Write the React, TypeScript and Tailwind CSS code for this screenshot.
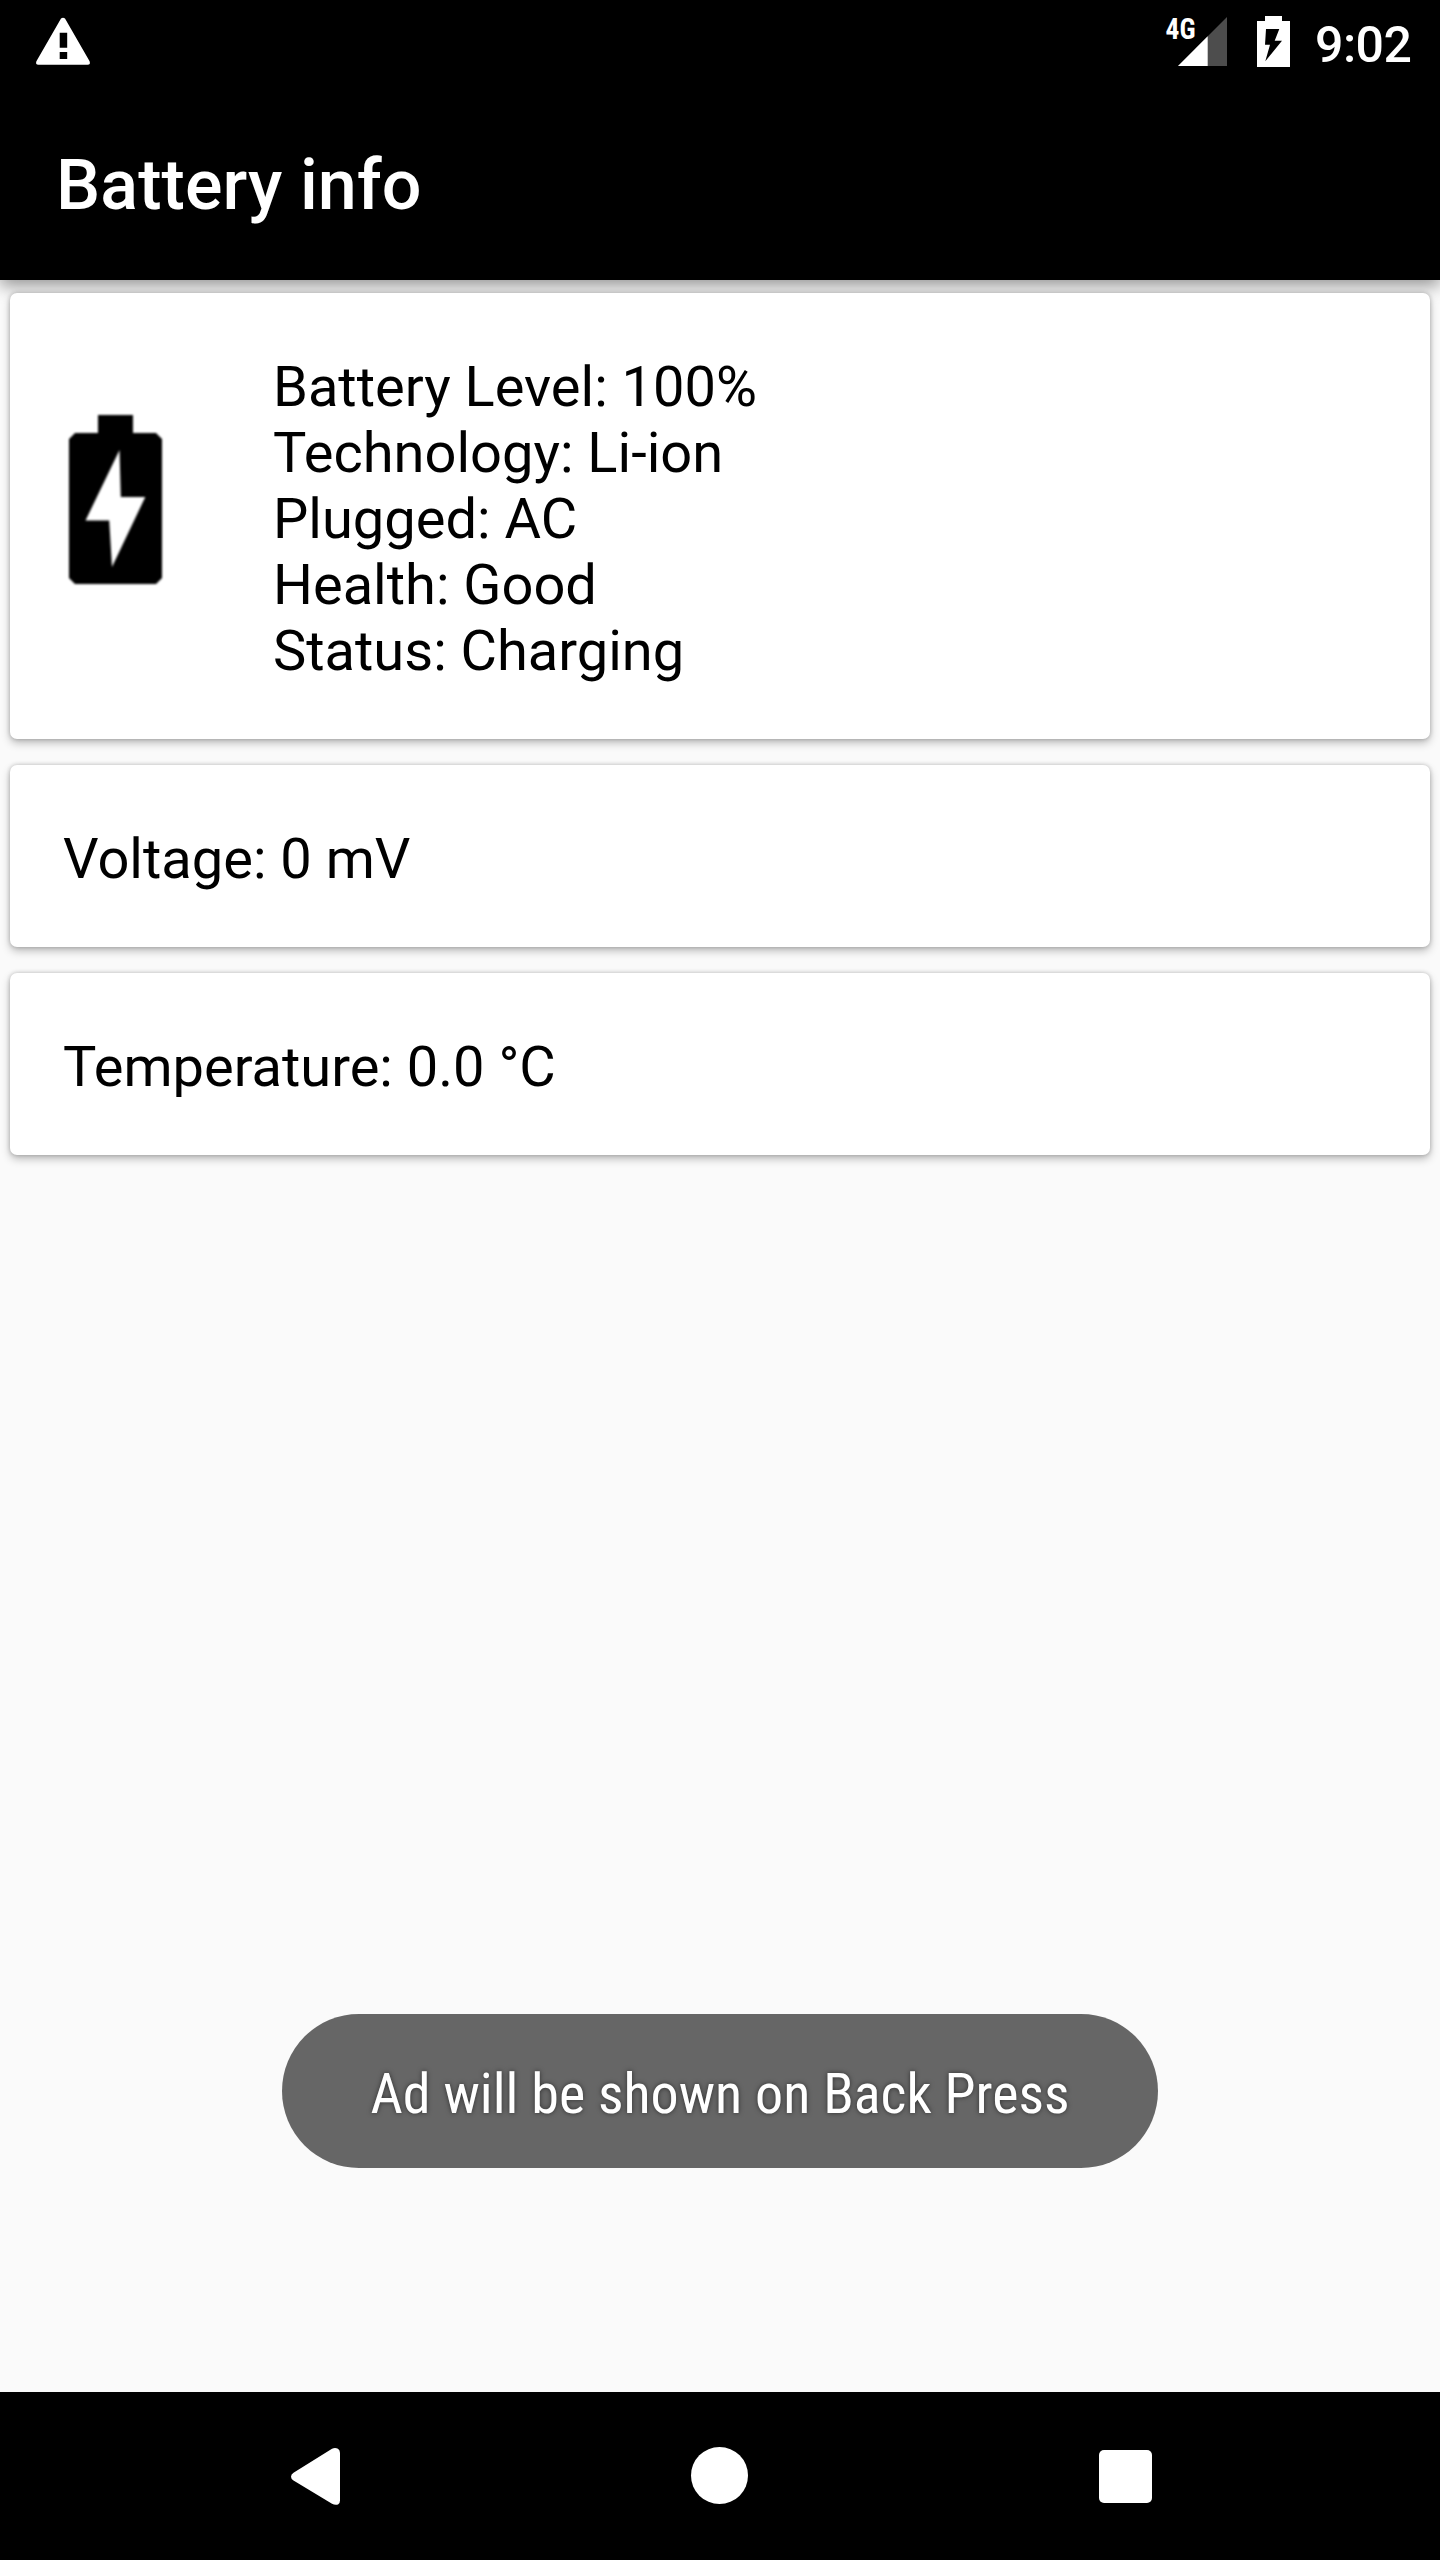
import type { ReactNode } from 'react'

const batteryDetails = [
  'Battery Level: 100%',
  'Technology: Li-ion',
  'Plugged: AC',
  'Health: Good',
  'Status: Charging',
]

function WarningIcon() {
  return (
    <svg className="h-[84px] w-[60px]" viewBox="33 0 60 84" fill="#fff">
      <path
        fillRule="evenodd"
        d="M61 18.6Q63 16.8 65 18.6L89.6 61.2Q90.8 64.7 87.6 64.7H38.4Q35.2 64.7 36.4 61.2ZM59.7 32.8V47.8H67.2V32.8ZM59.7 52V59H67.2V52Z"
      />
    </svg>
  )
}

function SignalIcon() {
  return (
    <svg className="h-[84px] w-[64px]" viewBox="1165 0 64 84">
      <path d="M1227 17V66H1178Z" fill="#4d4d4d" />
      <path d="M1207.7 36.3V66H1178Z" fill="#fff" />
      <text
        x="1165.5"
        y="39"
        fill="#fff"
        textLength="30"
        lengthAdjust="spacingAndGlyphs"
        className="font-['Roboto_Condensed','Roboto',sans-serif] text-[29px] font-bold"
      >
        4G
      </text>
    </svg>
  )
}

function StatusBatteryIcon() {
  return (
    <svg className="h-[84px] w-[33px]" viewBox="1257 0 33 84">
      <path d="M1265 16H1282V21H1290V67H1257V21H1265Z" fill="#fff" />
      <path d="M1266 29H1279.3L1274.7 40.7H1282L1265.3 61.3L1270 44.7H1265Z" fill="#000" />
    </svg>
  )
}

function BatteryIcon() {
  return (
    <svg className="h-[180px] w-[110px] blur-[1.2px]" viewBox="60 405 110 180">
      <path
        d="M98 415H133V433H156L162 439V578L156 584H75L69 578V439L75 433H98Z"
        fill="#000"
      />
      <path d="M119.5 450L120.8 497H145.3L112 567L109.2 520.5H85.5Z" fill="#fff" />
    </svg>
  )
}

function Card({ children }: { children: ReactNode }) {
  return (
    <section className="flex rounded-[7px] bg-white pt-[61px] pb-[55px] text-[56px] leading-[66px] text-black shadow-[0_4px_8px_rgba(0,0,0,0.25),0_0_4px_rgba(0,0,0,0.22)]">
      {children}
    </section>
  )
}

export default function App() {
  return (
    <div className="flex h-[2560px] w-[1440px] flex-col overflow-hidden bg-[#fafafa] font-['Roboto',sans-serif]">
      <header className="h-[280px] shrink-0 bg-black text-white shadow-[0_6px_16px_rgba(0,0,0,0.4)]">
        {/* Status bar */}
        <div className="flex h-[84px] items-center pr-[28px] pl-[33px]">
          <WarningIcon />
          <div className="ml-auto flex items-center">
            <SignalIcon />
            <div className="ml-[28px]">
              <StatusBatteryIcon />
            </div>
            <span className="ml-[25px] w-[97px] pt-[5px] text-[50px] leading-[58px] font-medium tracking-[-0.5px] whitespace-nowrap">
              9:02
            </span>
          </div>
        </div>
        {/* App bar */}
        <div className="flex h-[196px] items-center pl-[56px]">
          <h1 className="pt-[5px] text-[70px] leading-[82px] font-medium tracking-[0.1px]">
            Battery info
          </h1>
        </div>
      </header>

      <main className="flex flex-1 flex-col gap-[26px] px-[10px] pt-[13px]">
        <Card>
          <div className="mt-[51px] ml-[50px] h-[180px] w-[110px]">
            <BatteryIcon />
          </div>
          <ul className="ml-[103px]">
            {batteryDetails.map((line) => (
              <li key={line}>{line}</li>
            ))}
          </ul>
        </Card>
        <Card>
          <p className="ml-[53px]">Voltage: 0 mV</p>
        </Card>
        <Card>
          <p className="ml-[53px]">Temperature: 0.0 °C</p>
        </Card>

        {/* Toast */}
        <div className="mx-auto mt-auto mb-[224px] flex h-[154px] w-[876px] items-center justify-center rounded-full bg-[#666]">
          <svg className="h-[154px] w-[720px]" viewBox="360 2014 720 154">
            <text
              x="370.5"
              y="2113"
              fill="#fff"
              textLength="699"
              lengthAdjust="spacingAndGlyphs"
              className="font-['Roboto_Condensed','Roboto',sans-serif] text-[56px] [text-shadow:0_0_5px_rgba(0,0,0,0.55)]"
            >
              Ad will be shown on Back Press
            </text>
          </svg>
        </div>
      </main>

      {/* Navigation bar */}
      <nav className="flex h-[168px] shrink-0 items-center bg-black">
        <svg className="ml-[290px] h-[168px] w-[51px]" viewBox="290 2392 51 168" fill="#fff">
          <path d="M332 2448.8Q335 2447.2 338 2448.8Q340 2450 340 2453V2500.5Q340 2503.5 338 2504.5Q335 2505.5 332 2503.7L293.5 2480.5Q291 2479 291 2476.7Q291 2474.3 293.5 2472.7Z" />
        </svg>
        <div className="-mt-px ml-[350px] size-[57px] rounded-full bg-white" />
        <div className="ml-[351px] size-[53px] rounded-[5px] bg-white" />
      </nav>
    </div>
  )
}
